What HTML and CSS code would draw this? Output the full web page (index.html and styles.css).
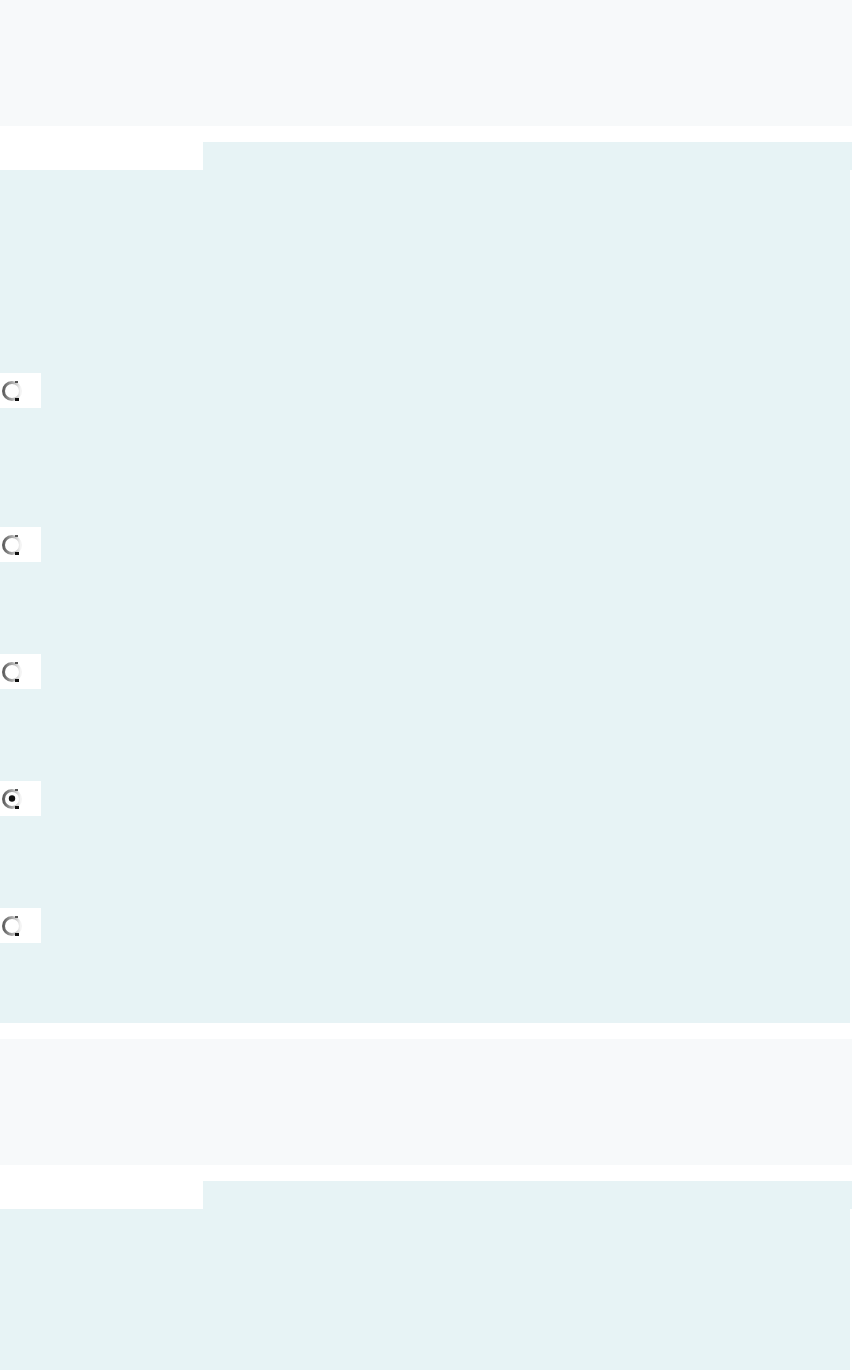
FILE: index.html
```html
<!DOCTYPE html>
<html>
<head>
  <title>Survey</title>
  <link rel="stylesheet" href="styles.css">
</head>
<body>
  <svg class="defs" width="0" height="0">
    <defs>
      <linearGradient id="ring" x1="0" y1="0" x2="1" y2="0">
        <stop offset="0" stop-color="#5f5f5f"/>
        <stop offset="0.5" stop-color="#a8a8a8"/>
        <stop offset="1" stop-color="#f4f4f4"/>
      </linearGradient>
    </defs>
  </svg>

  <div class="header"></div>

  <div class="panel">
    <div class="tab-row">
      <div class="tab-spacer"></div>
      <div class="tab"></div>
    </div>
    <div class="panel-body">
      <div class="option first">
        <svg class="radio" width="22" height="22" viewBox="0 0 22 22">
          <circle cx="11" cy="11" r="8.5" fill="none" stroke="url(#ring)" stroke-width="3"/>
          <rect x="14" y="1" width="3" height="2" fill="#555"/>
          <rect x="14" y="18" width="4" height="3" fill="#111"/>
        </svg>
      </div>
      <div class="option">
        <svg class="radio" width="22" height="22" viewBox="0 0 22 22">
          <circle cx="11" cy="11" r="8.5" fill="none" stroke="url(#ring)" stroke-width="3"/>
          <rect x="14" y="1" width="3" height="2" fill="#555"/>
          <rect x="14" y="18" width="4" height="3" fill="#111"/>
        </svg>
      </div>
      <div class="option">
        <svg class="radio" width="22" height="22" viewBox="0 0 22 22">
          <circle cx="11" cy="11" r="8.5" fill="none" stroke="url(#ring)" stroke-width="3"/>
          <rect x="14" y="1" width="3" height="2" fill="#555"/>
          <rect x="14" y="18" width="4" height="3" fill="#111"/>
        </svg>
      </div>
      <div class="option">
        <svg class="radio" width="22" height="22" viewBox="0 0 22 22">
          <circle cx="11" cy="11" r="8.5" fill="none" stroke="url(#ring)" stroke-width="3"/>
          <circle cx="11" cy="10.5" r="3.2" fill="#111"/>
          <rect x="14" y="1" width="3" height="2" fill="#555"/>
          <rect x="14" y="18" width="4" height="3" fill="#111"/>
        </svg>
      </div>
      <div class="option">
        <svg class="radio" width="22" height="22" viewBox="0 0 22 22">
          <circle cx="11" cy="11" r="8.5" fill="none" stroke="url(#ring)" stroke-width="3"/>
          <rect x="14" y="1" width="3" height="2" fill="#555"/>
          <rect x="14" y="18" width="4" height="3" fill="#111"/>
        </svg>
      </div>
    </div>
  </div>

  <div class="header"></div>

  <div class="panel">
    <div class="tab-row">
      <div class="tab-spacer"></div>
      <div class="tab"></div>
    </div>
    <div class="panel-body last"></div>
  </div>
</body>
</html>
```

FILE: styles.css
```css
body {
  margin: 0;
  background-color: #ffffff;
  font-family: "Liberation Sans", Arial, sans-serif;
}

.defs {
  position: absolute;
}

.header {
  height: 126px;
  background-color: #f7f9fa;
}

.panel {
  margin-top: 16px;
  margin-bottom: 16px;
}

.tab-row {
  display: flex;
  height: 28px;
}

.tab-spacer {
  width: 203px;
}

.tab {
  flex: 1;
  background-color: #e7f3f5;
}

.panel-body {
  display: flex;
  flex-direction: column;
  gap: 92px;
  margin-right: 2px;
  padding: 203px 0 80px;
  background-color: #e7f3f5;
}

.panel-body.last {
  height: 200px;
  padding: 0;
}

.option {
  display: flex;
  align-items: center;
  width: 41px;
  height: 35px;
  padding-left: 1px;
  box-sizing: border-box;
  background-color: #ffffff;
}

.option.first {
  margin-bottom: 27px;
}
```
